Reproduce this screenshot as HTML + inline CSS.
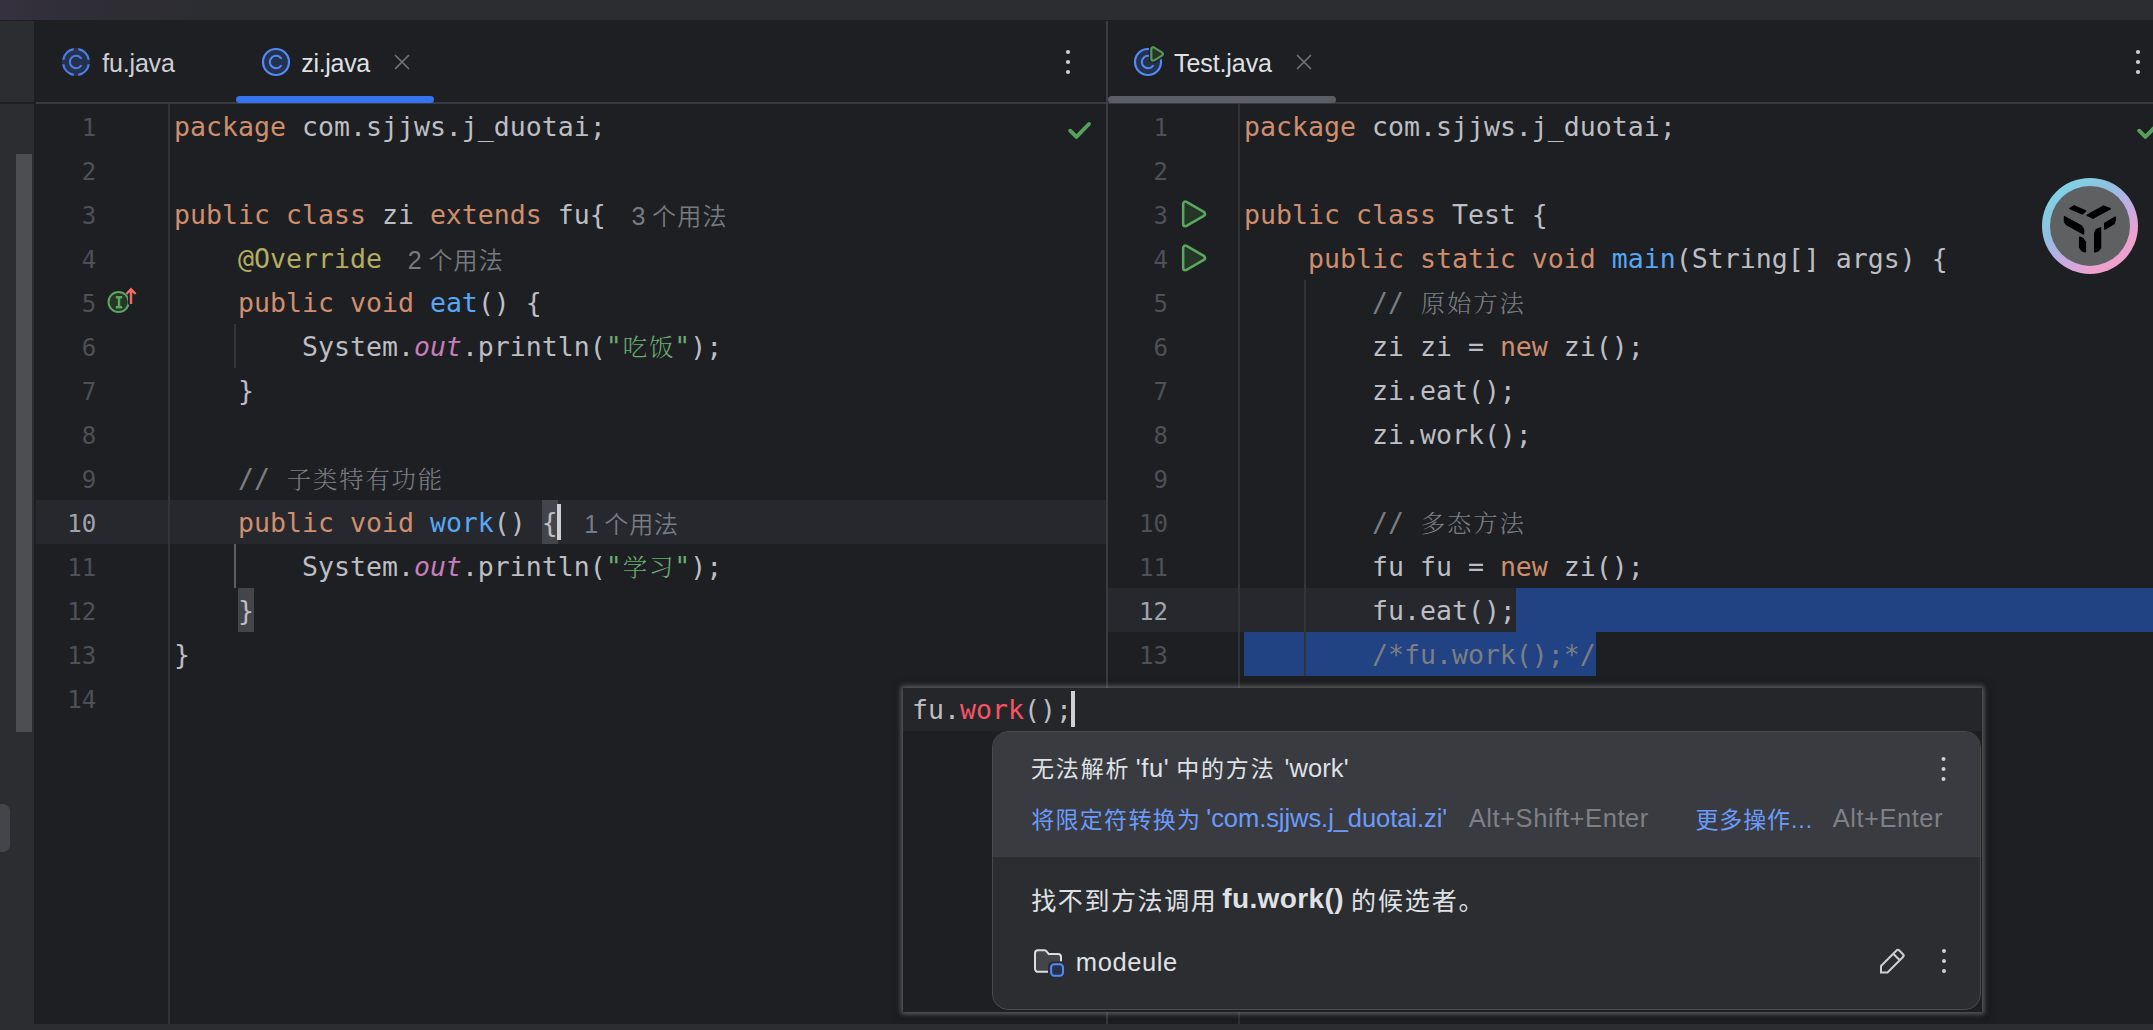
<!DOCTYPE html>
<html lang="zh"><head><meta charset="utf-8"><title>IDE</title>
<style>
*{box-sizing:border-box;margin:0;padding:0}
html,body{width:2153px;height:1030px;overflow:hidden;background:#1e1f22}
body{position:relative;font-family:"Liberation Sans", "Noto Sans CJK SC", sans-serif;color:#bcbec4}
.abs{position:absolute}
.code{position:absolute;white-space:pre;font-family:"DejaVu Sans Mono", "Liberation Mono", "Noto Serif CJK SC", monospace;font-size:26.576px;height:44px;line-height:44px;color:#bcbec4;letter-spacing:0}
.ln{position:absolute;font-family:"DejaVu Sans Mono", "Liberation Mono", "Noto Serif CJK SC", monospace;font-size:24.08px;height:44px;line-height:44px;color:#4b5059;text-align:right;width:80px}
.ln.cur{color:#a1a3ab}
.k{color:#cf8e6d}.m{color:#56a8f5}.s{color:#6aab73}.c{color:#7a7e85}.a{color:#b3ae60}
.f{color:#c77dbb;font-style:italic}
.z{font-weight:300;font-size:24.4px;letter-spacing:1.8px;margin-left:0.9px;margin-right:-0.9px;position:relative;top:-0.5px}
.h{font-family:"Liberation Sans", "Noto Sans CJK SC", sans-serif;font-size:24px;color:#868a91;margin-left:26px;letter-spacing:0}
.h2{margin-left:20px}
.br{background:#43454a;display:inline-block;height:44px;vertical-align:top}
.caret{display:inline-block;width:4px;height:34px;background:#ced0d6;vertical-align:top;margin:5px -4px 0 0;position:relative;left:-3px}
.tab{position:absolute;font-size:25px;color:#ced0d6;height:40px;line-height:40px;top:43px;white-space:pre}
.sg{position:absolute;white-space:pre;font-family:"Liberation Sans", "Noto Sans CJK SC", sans-serif;height:40px;line-height:40px}
</style></head><body>

<div class="abs" style="left:0;top:0;width:2153px;height:20px;background:linear-gradient(90deg,#36323f 0,#302e38 60px,#2d2d33 150px,#2b2d30 260px)"></div>
<div class="abs" style="left:0;top:20px;width:2153px;height:1px;background:#1e1f22"></div>
<div class="abs" style="left:0;top:21px;width:34px;height:1003px;background:#2b2d30"></div>
<div class="abs" style="left:0;top:101.6px;width:34px;height:2px;background:#1e1f22"></div>
<div class="abs" style="left:16px;top:154px;width:16px;height:578px;background:#4d4e51"></div>
<div class="abs" style="left:-10px;top:804px;width:20px;height:48px;border-radius:7px;background:#43454a"></div>
<div class="abs" style="left:36px;top:102px;width:2117px;height:2px;background:#393b40"></div>
<div class="abs" style="left:1106px;top:21px;width:2px;height:1003px;background:#393b40"></div>
<div class="abs" style="left:168px;top:104px;width:2px;height:920px;background:#313438"></div>
<div class="abs" style="left:1238px;top:104px;width:2px;height:920px;background:#313438"></div>
<div class="abs" style="left:236px;top:96px;width:198px;height:7px;border-radius:4px;background:#3574f0"></div>
<div class="abs" style="left:1108px;top:96px;width:228px;height:7px;border-radius:4px;background:#5a5d63"></div>
<div class="abs" style="left:36px;top:500px;width:1070px;height:44px;background:#26282e"></div>
<div class="abs" style="left:168px;top:500px;width:2px;height:44px;background:#313438"></div>
<div class="abs" style="left:542px;top:500px;width:16px;height:44px;background:#43454a"></div>
<div class="abs" style="left:238px;top:588px;width:16px;height:44px;background:#43454a"></div>
<div class="abs" style="left:1108px;top:588px;width:1045px;height:44px;background:#26282e"></div>
<div class="abs" style="left:1516px;top:588px;width:640px;height:44px;background:#214283"></div>
<div class="abs" style="left:1244px;top:632px;width:352px;height:44px;background:#214283"></div>
<div class="abs" style="left:1238px;top:588px;width:2px;height:44px;background:#313438"></div>
<div class="abs" style="left:234px;top:324px;width:2px;height:44px;background:#313438"></div>
<div class="abs" style="left:234px;top:544px;width:2px;height:44px;background:#5a5d63"></div>
<div class="abs" style="left:1304px;top:280px;width:2px;height:396px;background:#313438"></div>
<div class="ln" style="left:16.2px;top:106.2px">1</div>
<div class="code" style="left:174px;top:105px"><span class="k">package</span> com.sjjws.j_duotai;</div>
<div class="ln" style="left:16.2px;top:150.2px">2</div>
<div class="ln" style="left:16.2px;top:194.2px">3</div>
<div class="code" style="left:174px;top:193px"><span class="k">public class</span> zi <span class="k">extends</span> fu{</div>
<div class="ln" style="left:16.2px;top:238.2px">4</div>
<div class="code" style="left:174px;top:237px">    <span class="a">@Override</span></div>
<div class="ln" style="left:16.2px;top:282.2px">5</div>
<div class="code" style="left:174px;top:281px">    <span class="k">public void</span> <span class="m">eat</span>() {</div>
<div class="ln" style="left:16.2px;top:326.2px">6</div>
<div class="code" style="left:174px;top:325px">        System.<span class="f">out</span>.println(<span class="s">"<span class="z">吃饭</span>"</span>);</div>
<div class="ln" style="left:16.2px;top:370.2px">7</div>
<div class="code" style="left:174px;top:369px">    }</div>
<div class="ln" style="left:16.2px;top:414.2px">8</div>
<div class="ln" style="left:16.2px;top:458.2px">9</div>
<div class="code" style="left:174px;top:457px">    <span class="c">// <span class="z">子类特有功能</span></span></div>
<div class="ln cur" style="left:16.2px;top:502.2px">10</div>
<div class="code" style="left:174px;top:501px">    <span class="k">public void</span> <span class="m">work</span>() {</div>
<div class="ln" style="left:16.2px;top:546.2px">11</div>
<div class="code" style="left:174px;top:545px">        System.<span class="f">out</span>.println(<span class="s">"<span class="z">学习</span>"</span>);</div>
<div class="ln" style="left:16.2px;top:590.2px">12</div>
<div class="code" style="left:174px;top:589px">    }</div>
<div class="ln" style="left:16.2px;top:634.2px">13</div>
<div class="code" style="left:174px;top:633px">}</div>
<div class="ln" style="left:16.2px;top:678.2px">14</div>
<div class="ln" style="left:1088px;top:106.2px">1</div>
<div class="code" style="left:1244px;top:105px"><span class="k">package</span> com.sjjws.j_duotai;</div>
<div class="ln" style="left:1088px;top:150.2px">2</div>
<div class="ln" style="left:1088px;top:194.2px">3</div>
<div class="code" style="left:1244px;top:193px"><span class="k">public class</span> Test {</div>
<div class="ln" style="left:1088px;top:238.2px">4</div>
<div class="code" style="left:1244px;top:237px">    <span class="k">public static void</span> <span class="m">main</span>(String[] args) {</div>
<div class="ln" style="left:1088px;top:282.2px">5</div>
<div class="code" style="left:1244px;top:281px">        <span class="c">// <span class="z">原始方法</span></span></div>
<div class="ln" style="left:1088px;top:326.2px">6</div>
<div class="code" style="left:1244px;top:325px">        zi zi = <span class="k">new</span> zi();</div>
<div class="ln" style="left:1088px;top:370.2px">7</div>
<div class="code" style="left:1244px;top:369px">        zi.eat();</div>
<div class="ln" style="left:1088px;top:414.2px">8</div>
<div class="code" style="left:1244px;top:413px">        zi.work();</div>
<div class="ln" style="left:1088px;top:458.2px">9</div>
<div class="ln" style="left:1088px;top:502.2px">10</div>
<div class="code" style="left:1244px;top:501px">        <span class="c">// <span class="z">多态方法</span></span></div>
<div class="ln" style="left:1088px;top:546.2px">11</div>
<div class="code" style="left:1244px;top:545px">        fu fu = <span class="k">new</span> zi();</div>
<div class="ln cur" style="left:1088px;top:590.2px">12</div>
<div class="code" style="left:1244px;top:589px">        fu.eat();</div>
<div class="ln" style="left:1088px;top:634.2px">13</div>
<div class="code" style="left:1244px;top:633px">        <span class="c">/*fu.work();*/</span></div>
<div class="abs" style="left:557px;top:504px;width:4px;height:36px;background:#ced0d6"></div>
<svg class="abs" style="left:0;top:0" width="2153" height="1030" viewBox="0 0 2153 1030">
<circle cx="76" cy="62" r="14" fill="#25324d"/><path d="M88.80 64.26A13 13 0 0 1 78.26 74.80" fill="none" stroke="#4d7de0" stroke-width="2.2"/><path d="M73.74 74.80A13 13 0 0 1 63.20 64.26" fill="none" stroke="#4d7de0" stroke-width="2.2"/><path d="M63.20 59.74A13 13 0 0 1 73.74 49.20" fill="none" stroke="#4d7de0" stroke-width="2.2"/><path d="M78.26 49.20A13 13 0 0 1 88.80 59.74" fill="none" stroke="#4d7de0" stroke-width="2.2"/><path d="M80.89 58.18A6.2 6.2 0 1 0 80.89 65.82" fill="none" stroke="#4d7de0" stroke-width="2.1" stroke-linecap="round"/>
<circle cx="276" cy="62" r="13" fill="#25324d" stroke="#548af7" stroke-width="2.2"/><path d="M280.89 58.18A6.2 6.2 0 1 0 280.89 65.82" fill="none" stroke="#548af7" stroke-width="2.1" stroke-linecap="round"/>
<path d="M395.5 55.5L408.5 68.5M408.5 55.5L395.5 68.5" stroke="#6f737a" stroke-width="1.7" stroke-linecap="round" fill="none"/>
<circle cx="1148" cy="62" r="13" fill="#25324d" stroke="#548af7" stroke-width="2.2"/><path d="M1152.89 58.18A6.2 6.2 0 1 0 1152.89 65.82" fill="none" stroke="#548af7" stroke-width="2.1" stroke-linecap="round"/>
<path d="M1153.2 49.2L1153.2 58.8L1160.9 54Z" fill="#1e1f22" stroke="#1e1f22" stroke-width="8.6" stroke-linejoin="round"/>
<path d="M1153.2 49.2L1153.2 58.8L1160.9 54Z" fill="#57965c" stroke="#57965c" stroke-width="6" stroke-linejoin="round"/>
<path d="M1153.2 49.2L1153.2 58.8L1160.9 54Z" fill="#253627" stroke="#253627" stroke-width="1.6" stroke-linejoin="round"/>
<path d="M1297.5 55.5L1310.5 68.5M1310.5 55.5L1297.5 68.5" stroke="#6f737a" stroke-width="1.7" stroke-linecap="round" fill="none"/>
<circle cx="1068" cy="52" r="2.1" fill="#ced0d6"/><circle cx="1068" cy="62" r="2.1" fill="#ced0d6"/><circle cx="1068" cy="72" r="2.1" fill="#ced0d6"/>
<circle cx="2138" cy="52" r="2.1" fill="#ced0d6"/><circle cx="2138" cy="62" r="2.1" fill="#ced0d6"/><circle cx="2138" cy="72" r="2.1" fill="#ced0d6"/>
<path d="M1070.2 130.7L1076.4 136.9L1089 124" fill="none" stroke="#57a05d" stroke-width="3.9" stroke-linecap="round" stroke-linejoin="round"/>
<path d="M2139.2 130.7L2145.4 136.9L2158 124" fill="none" stroke="#57a05d" stroke-width="3.9" stroke-linecap="round" stroke-linejoin="round"/>
<path d="M1185.4 203.9L1185.4 223.9L1202.7 213.9Z" fill="#5aa762" stroke="#5aa762" stroke-width="7" stroke-linejoin="round"/><path d="M1185.4 203.9L1185.4 223.9L1202.7 213.9Z" fill="#253627" stroke="#253627" stroke-width="2.0" stroke-linejoin="round"/>
<path d="M1185.4 247.89999999999998L1185.4 267.9L1202.7 257.9Z" fill="#5aa762" stroke="#5aa762" stroke-width="7" stroke-linejoin="round"/><path d="M1185.4 247.89999999999998L1185.4 267.9L1202.7 257.9Z" fill="#253627" stroke="#253627" stroke-width="2.0" stroke-linejoin="round"/>
<circle cx="118.6" cy="302" r="10.1" fill="#253627" stroke="#5aa762" stroke-width="2.0"/>
<path d="M115.8 297.2H122.2M115.8 307.2H122.2M119 297.2V307.2" stroke="#5aa762" stroke-width="2.4" fill="none"/>
<path d="M131 304.5V289.5M126.3 294L131 289L135.7 294" stroke="#1e1f22" stroke-width="6" fill="none" stroke-linecap="butt"/>
<path d="M131 304V289.6M126.4 294L131 289.2L135.6 294" stroke="#f26b6b" stroke-width="2.4" fill="none" stroke-linejoin="miter"/>
<defs><linearGradient id="gr" x1="0.15" y1="0.1" x2="0.85" y2="0.95"><stop offset="0" stop-color="#7fd4e6"/><stop offset="0.3" stop-color="#8fc0e0"/><stop offset="0.55" stop-color="#bfaee6"/><stop offset="0.8" stop-color="#eba2d0"/><stop offset="1" stop-color="#f0a0c8"/></linearGradient></defs>
<circle cx="2090" cy="225.9" r="48" fill="url(#gr)"/>
<circle cx="2090" cy="225.9" r="40" fill="#5f6062"/>
<g transform="translate(2040,176) scale(0.09709)" fill="#000" stroke="#000" stroke-width="18" stroke-linejoin="round">
<polygon points="310,335 352,309 468,362 436,388"/>
<polygon points="488,405 655,311 722,338 545,433"/>
<polygon points="254,422 425,515 447,550 447,594 275,500 254,470"/>
<polygon points="668,488 775,424 775,448 762,490 668,545"/>
<polygon points="410,632 440,645 466,680 466,780 435,770 410,735"/>
<polygon points="565,590 580,555 622,535 622,738 600,768 565,780"/>
</g>
</svg>
<div class="abs" style="left:903px;top:688px;width:1079px;height:324px;background:#1e1f22;box-shadow:0 0 5px 2px rgba(215,215,215,.36),2px 2px 9px 7px rgba(0,0,0,.17)"></div>
<div class="abs" style="left:903px;top:688px;width:1079px;height:43px;background:#25262a"></div>
<div class="code" style="left:912px;top:688px">fu.<span style="color:#f75464">work</span>();</div>
<div class="abs" style="left:1071px;top:691px;width:4px;height:36px;background:#ced0d6"></div>
<div class="abs" style="left:992px;top:731px;width:989px;height:279px;border-radius:16px;background:#2b2d30;border:1px solid #47494e;overflow:hidden"><div style="height:125px;background:#393b40"></div></div>
<svg class="abs" style="left:0;top:0" width="2153" height="1030" viewBox="0 0 2153 1030">
<circle cx="1943.5" cy="759" r="2.0" fill="#ced0d6"/><circle cx="1943.5" cy="769" r="2.0" fill="#ced0d6"/><circle cx="1943.5" cy="779" r="2.0" fill="#ced0d6"/>
<circle cx="1944" cy="951" r="2.0" fill="#ced0d6"/><circle cx="1944" cy="961" r="2.0" fill="#ced0d6"/><circle cx="1944" cy="971" r="2.0" fill="#ced0d6"/>
<path d="M1035 953.2a3 3 0 0 1 3-3h6.6a2 2 0 0 1 1.5 .7l2.6 3.1h9.3a3 3 0 0 1 3 3v11.8a3 3 0 0 1-3 3h-20a3 3 0 0 1-3-3z" fill="#43454a" stroke="#dcdde0" stroke-width="2"/>
<rect x="1048" y="961.2" width="18" height="17.5" rx="5" fill="#2b2d30"/>
<rect x="1051.1" y="964.2" width="11.9" height="11.5" rx="3.2" fill="#25324d" stroke="#548af7" stroke-width="2"/>
<path d="M1881 972.5v-6.5l15.5-15.5a2 2 0 0 1 2.8 0l3.7 3.7a2 2 0 0 1 0 2.8l-15.5 15.5zM1893 953.5l6.5 6.5" fill="none" stroke="#ced0d6" stroke-width="2" stroke-linejoin="miter"/>
</svg>
<div class="sg" id="t1" style="left:102.29px;top:43.34px;font-size:25px;color:#ced0d6;letter-spacing:-0.186px;">fu.java</div>
<div class="sg" id="t2" style="left:301.25px;top:43.34px;font-size:25px;color:#dfe1e5;letter-spacing:-0.307px;">zi.java</div>
<div class="sg" id="t3" style="left:1174.03px;top:43.34px;font-size:25px;color:#dfe1e5;letter-spacing:-0.089px;">Test.java</div>
<div class="sg" id="h3a" style="left:631.54px;top:195.54px;font-size:25px;color:#777a81;letter-spacing:0.000px;font-weight:350;">3</div>
<div class="sg" id="h3b" style="left:651.99px;top:197.08px;font-size:24px;color:#777a81;letter-spacing:1.265px;font-weight:350;">个用法</div>
<div class="sg" id="h4a" style="left:407.82px;top:239.54px;font-size:25px;color:#777a81;letter-spacing:0.000px;font-weight:350;">2</div>
<div class="sg" id="h4b" style="left:428.42px;top:241.08px;font-size:24px;color:#777a81;letter-spacing:1.145px;font-weight:350;">个用法</div>
<div class="sg" id="h10a" style="left:584.37px;top:503.54px;font-size:25px;color:#777a81;letter-spacing:0.000px;font-weight:350;">1</div>
<div class="sg" id="h10b" style="left:604.30px;top:505.08px;font-size:24px;color:#777a81;letter-spacing:0.906px;font-weight:350;">个用法</div>
<div class="sg" id="r1a" style="left:1031.02px;top:749.33px;font-size:23px;color:#dfe1e5;letter-spacing:1.816px;">无法解析</div>
<div class="sg" id="r1b" style="left:1135.68px;top:747.96px;font-size:25.5px;color:#dfe1e5;letter-spacing:0.633px;">'fu'</div>
<div class="sg" id="r1c" style="left:1176.16px;top:749.33px;font-size:23px;color:#dfe1e5;letter-spacing:1.827px;">中的方法</div>
<div class="sg" id="r1d" style="left:1284.50px;top:747.96px;font-size:25.5px;color:#dfe1e5;letter-spacing:0.088px;">'work'</div>
<div class="sg" id="r2a" style="left:1031.17px;top:799.53px;font-size:23px;color:#6b9bfa;letter-spacing:1.310px;">将限定符转换为</div>
<div class="sg" id="r2b" style="left:1206.37px;top:798.16px;font-size:25.5px;color:#6b9bfa;letter-spacing:-0.062px;">'com.sjjws.j_duotai.zi'</div>
<div class="sg" id="r2c" style="left:1468.63px;top:798.16px;font-size:25.5px;color:#7d8087;letter-spacing:0.585px;">Alt+Shift+Enter</div>
<div class="sg" id="r2d" style="left:1695.38px;top:799.53px;font-size:23px;color:#6b9bfa;letter-spacing:0.912px;">更多操作...</div>
<div class="sg" id="r2e" style="left:1832.76px;top:798.16px;font-size:25.5px;color:#7d8087;letter-spacing:0.508px;">Alt+Enter</div>
<div class="sg" id="r3a" style="left:1031.25px;top:880.84px;font-size:25px;color:#dfe1e5;letter-spacing:1.580px;">找不到方法调用</div>
<div class="sg" id="r3b" style="left:1222.19px;top:879.30px;font-size:28px;color:#dfe1e5;letter-spacing:0.407px;font-weight:700;">fu.work()</div>
<div class="sg" id="r3c" style="left:1351.06px;top:880.84px;font-size:25px;color:#dfe1e5;letter-spacing:1.861px;">的候选者。</div>
<div class="sg" id="r4" style="left:1075.84px;top:942.16px;font-size:25.5px;color:#dfe1e5;letter-spacing:0.572px;">modeule</div>
<div class="abs" style="left:0;top:1024px;width:2153px;height:6px;background:#2b2d30"></div>
</body></html>
